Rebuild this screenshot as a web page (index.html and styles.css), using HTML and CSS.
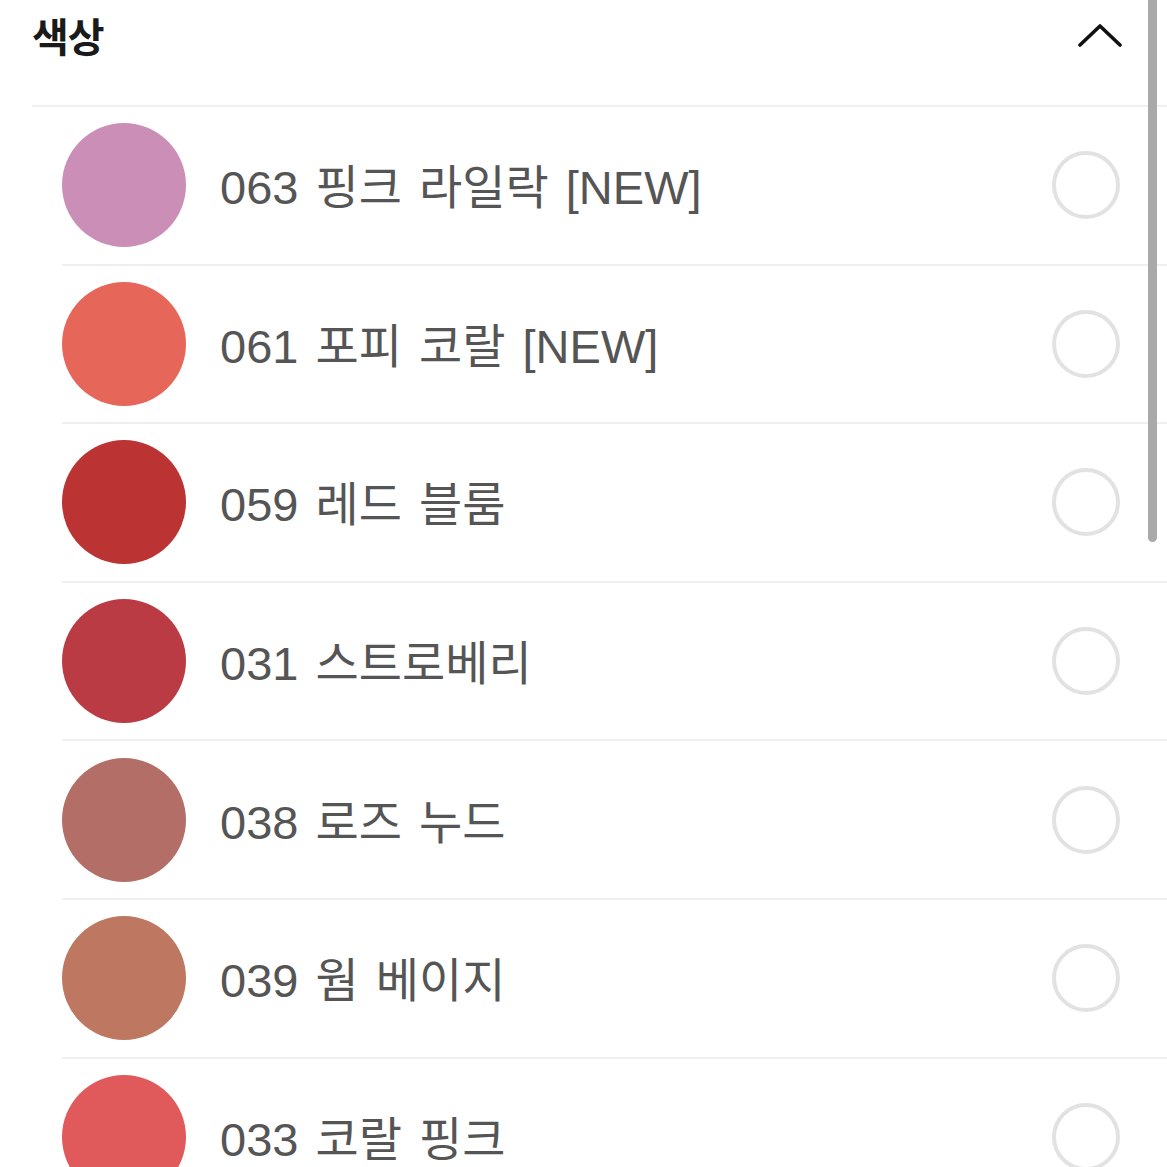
FILE: index.html
```html
<!DOCTYPE html>
<html lang="ko">
<head>
<meta charset="utf-8">
<link rel="stylesheet" href="styles.css">
</head>
<body>
<div class="panel">
  <div class="header">
    <h2 class="title">색상</h2>
    <svg class="chevron" width="44" height="26" viewBox="0 0 44 26"><polyline points="2,22 22,3 42,22" fill="none" stroke="#111" stroke-width="3.6" stroke-linecap="round" stroke-linejoin="round"/></svg>
  </div>
  <ul class="list">
    <li class="row"><span class="swatch c063"></span><span class="name">063 핑크 라일락 [NEW]</span><span class="radio"></span></li>
    <li class="row"><span class="swatch c061"></span><span class="name">061 포피 코랄 [NEW]</span><span class="radio"></span></li>
    <li class="row"><span class="swatch c059"></span><span class="name">059 레드 블룸</span><span class="radio"></span></li>
    <li class="row"><span class="swatch c031"></span><span class="name">031 스트로베리</span><span class="radio"></span></li>
    <li class="row"><span class="swatch c038"></span><span class="name">038 로즈 누드</span><span class="radio"></span></li>
    <li class="row"><span class="swatch c039"></span><span class="name">039 웜 베이지</span><span class="radio"></span></li>
    <li class="row"><span class="swatch c033"></span><span class="name">033 코랄 핑크</span><span class="radio"></span></li>
  </ul>
  <div class="scrollbar"></div>
</div>
</body>
</html>
```
FILE: styles.css
```css
html, body {
  margin: 0;
  padding: 0;
  background: #fff;
}
.panel {
  position: relative;
  width: 1167px;
  height: 1167px;
  overflow: hidden;
  font-family: "Liberation Sans", "Noto Sans CJK KR", sans-serif;
}
.header {
  height: 70px;
  margin-bottom: 35px;
  padding: 0 45px 0 32px;
  display: flex;
  align-items: center;
  justify-content: space-between;
}
.title {
  margin: 0;
  font-family: "Noto Sans CJK KR", sans-serif;
  font-size: 40px;
  font-weight: 700;
  color: #1a1a1a;
  letter-spacing: -1px;
}
.chevron {
  display: block;
  margin-top: 2px;
}
.list {
  list-style: none;
  margin: 0 0 0 32px;
  padding: 0 0 0 30px;
  border-top: 2px solid #f0f0f0;
}
.row {
  height: 156.6px;
  border-bottom: 2px solid #efefef;
  display: flex;
  align-items: center;
  padding-right: 47px;
}
.swatch {
  width: 124px;
  height: 124px;
  border-radius: 50%;
  flex: none;
}
.c063 { background: #cb8fb7; }
.c061 { background: #e6665a; }
.c059 { background: #bb3333; }
.c031 { background: #bb3b44; }
.c038 { background: #b46e68; }
.c039 { background: #be7760; }
.c033 { background: #e05a5c; }
.name {
  flex: 1;
  margin-left: 34px;
  margin-top: -3px;
  font-size: 47px;
  word-spacing: 4px;
  color: #555;
  white-space: nowrap;
}
.radio {
  width: 60px;
  height: 60px;
  border: 4px solid #e2e2e2;
  border-radius: 50%;
  flex: none;
}
.scrollbar {
  position: absolute;
  left: 1148px;
  top: -10px;
  width: 9px;
  height: 552px;
  border-radius: 5px;
  background: #a9a9a9;
}
```
